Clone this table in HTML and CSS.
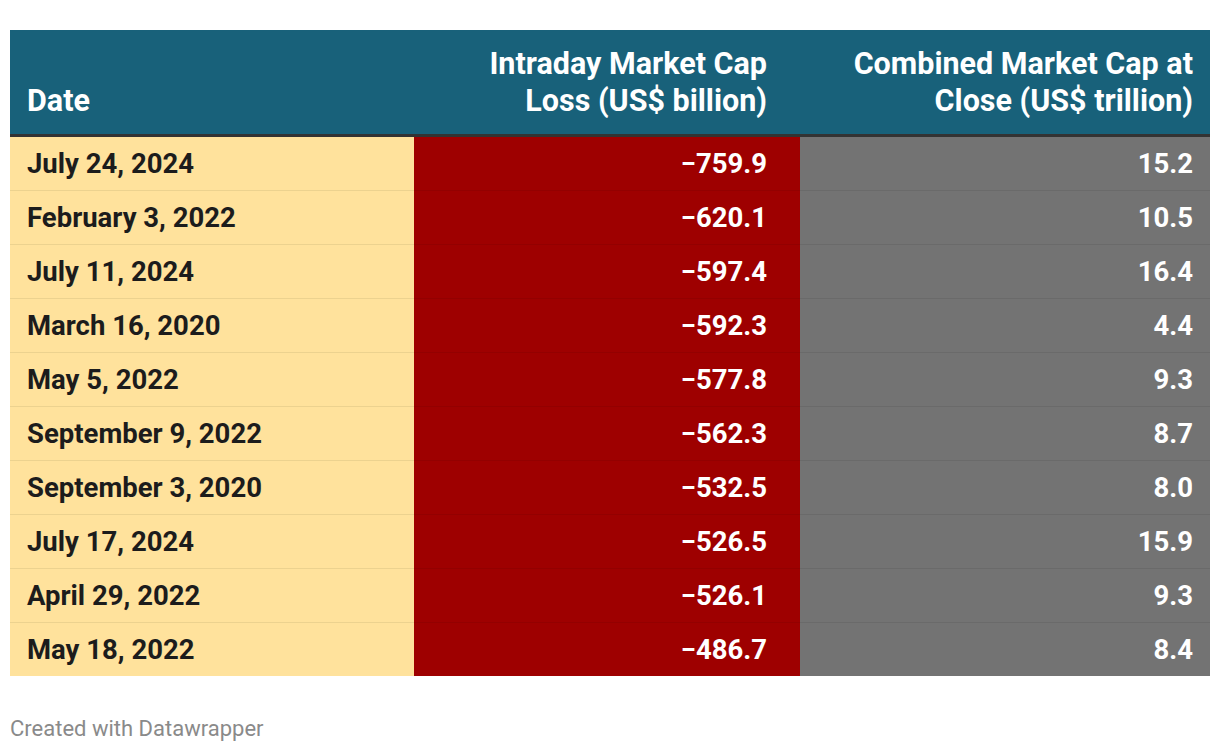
FILE: index.html
```html
<!DOCTYPE html>
<html>
<head>
<meta charset="utf-8">
<link rel="stylesheet" href="styles.css">
</head>
<body>
<div class="chart">
  <table class="tbl">
    <thead>
      <tr>
        <th class="c1">Date</th>
        <th class="c2">Intraday Market Cap<br>Loss (US$ billion)</th>
        <th class="c3">Combined Market Cap at<br>Close (US$ trillion)</th>
      </tr>
    </thead>
    <tbody>
      <tr><td class="c1">July 24, 2024</td><td class="c2">−759.9</td><td class="c3">15.2</td></tr>
      <tr><td class="c1">February 3, 2022</td><td class="c2">−620.1</td><td class="c3">10.5</td></tr>
      <tr><td class="c1">July 11, 2024</td><td class="c2">−597.4</td><td class="c3">16.4</td></tr>
      <tr><td class="c1">March 16, 2020</td><td class="c2">−592.3</td><td class="c3">4.4</td></tr>
      <tr><td class="c1">May 5, 2022</td><td class="c2">−577.8</td><td class="c3">9.3</td></tr>
      <tr><td class="c1">September 9, 2022</td><td class="c2">−562.3</td><td class="c3">8.7</td></tr>
      <tr><td class="c1">September 3, 2020</td><td class="c2">−532.5</td><td class="c3">8.0</td></tr>
      <tr><td class="c1">July 17, 2024</td><td class="c2">−526.5</td><td class="c3">15.9</td></tr>
      <tr><td class="c1">April 29, 2022</td><td class="c2">−526.1</td><td class="c3">9.3</td></tr>
      <tr><td class="c1">May 18, 2022</td><td class="c2">−486.7</td><td class="c3">8.4</td></tr>
    </tbody>
  </table>
  <div class="credit">Created with Datawrapper</div>
</div>
</body>
</html>
```
FILE: styles.css
```css
html, body {
  margin: 0;
  padding: 0;
  background: #ffffff;
}
body {
  font-family: Roboto, "Liberation Sans", sans-serif;
}
.chart {
  padding: 30px 10px 0 10px;
}
.tbl {
  width: 1200px;
  border-collapse: separate;
  border-spacing: 0;
  table-layout: fixed;
}
.tbl th {
  background: #18617a;
  color: #ffffff;
  font-weight: 700;
  font-size: 30.5px;
  line-height: 37px;
  height: 107px;
  vertical-align: bottom;
  padding: 0 0 15px 0;
  box-sizing: border-box;
  border-bottom: 3px solid #333333;
}
.tbl th.c1 { width: 404px; text-align: left; padding-left: 17px; }
.tbl th.c2 { width: 386px; text-align: right; padding-right: 33px; }
.tbl th.c3 { width: 410px; text-align: right; padding-right: 17px; }
.tbl td {
  height: 54px;
  padding: 0;
  box-sizing: border-box;
  font-size: 27.5px;
  line-height: 32px;
  font-weight: 700;
  vertical-align: middle;
  border-bottom: 1px solid;
}
.tbl tbody tr:last-child td { border-bottom: none; height: 53px; }
.tbl td.c1 {
  background: #ffe29c;
  color: #1c1c1c;
  padding-left: 17px;
  border-bottom-color: #ecd28f;
}
.tbl td.c2 {
  background: #9e0000;
  color: #ffffff;
  text-align: right;
  padding-right: 33px;
  border-bottom-color: #930000;
}
.tbl td.c3 {
  background: #737373;
  color: #ffffff;
  text-align: right;
  padding-right: 17px;
  border-bottom-color: #6a6a6a;
}
.credit {
  margin-top: 40px;
  font-size: 22px;
  line-height: 26px;
  color: #8a8a8a;
}
```
